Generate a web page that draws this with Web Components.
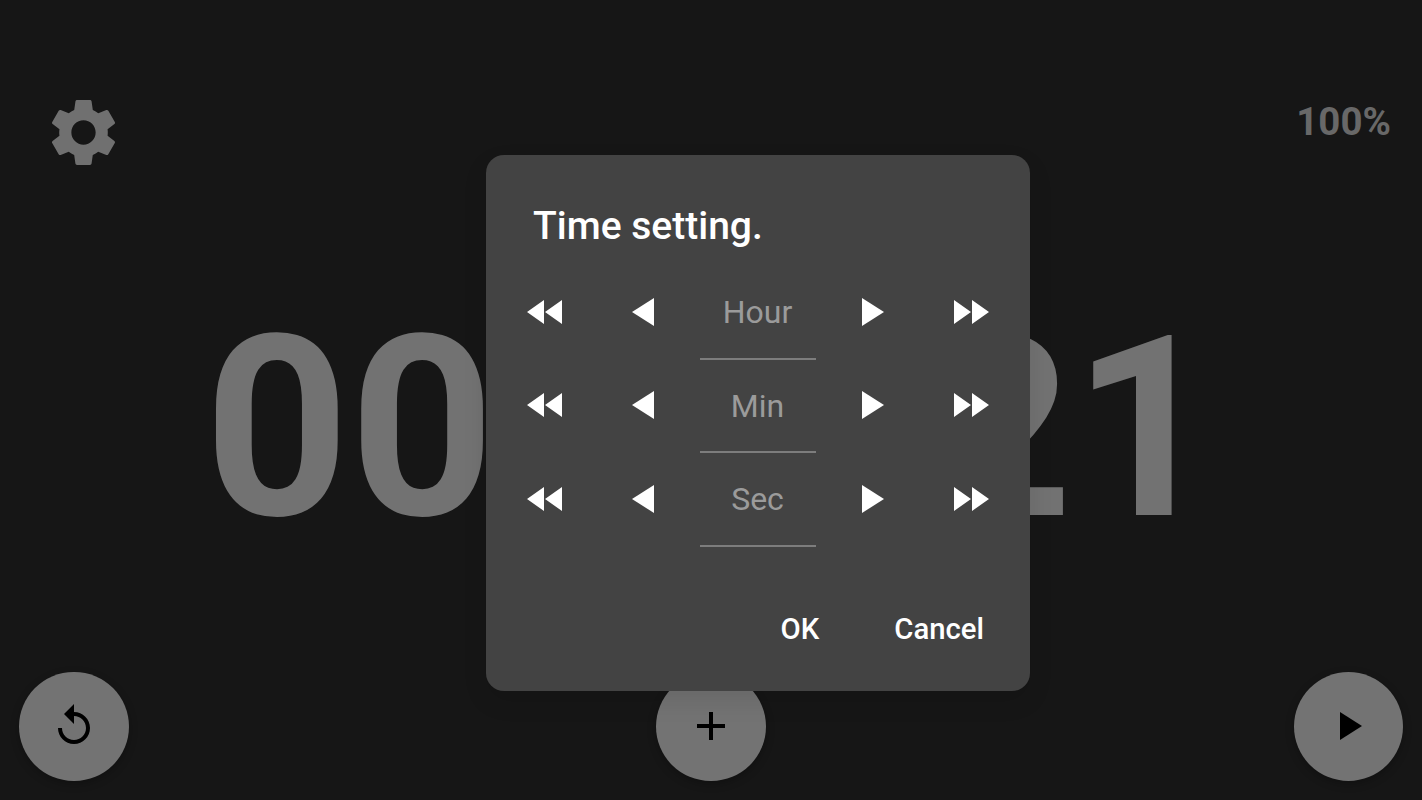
<!DOCTYPE html>
<html>
<head>
<meta charset="utf-8">
<title>Timer</title>
<style>
    html, body { margin: 0; height: 100%; background: #161616; font-family: Roboto, sans-serif; }
</style>
</head>
<body>
<timer-screen>
    <time-dialog></time-dialog>
</timer-screen>

<script>
const ICONS = {
    settings: 'M19.14,12.94c0.04-0.3,0.06-0.61,0.06-0.94c0-0.32-0.02-0.64-0.07-0.94l2.03-1.58c0.18-0.14,0.23-0.41,0.12-0.61l-1.92-3.32c-0.12-0.22-0.37-0.29-0.59-0.22l-2.39,0.96c-0.5-0.38-1.03-0.7-1.62-0.94L14.4,2.81c-0.04-0.24-0.24-0.41-0.48-0.41h-3.84c-0.24,0-0.43,0.17-0.47,0.41L9.25,5.35C8.66,5.59,8.12,5.92,7.63,6.29L5.24,5.33c-0.22-0.08-0.47,0-0.59,0.22L2.74,8.87C2.62,9.08,2.66,9.34,2.86,9.48l2.03,1.58C4.84,11.36,4.8,11.69,4.8,12s0.02,0.64,0.07,0.94l-2.03,1.58c-0.18,0.14-0.23,0.41-0.12,0.61l1.92,3.32c0.12,0.22,0.37,0.29,0.59,0.22l2.39-0.96c0.5,0.38,1.03,0.7,1.62,0.94l0.36,2.54c0.05,0.24,0.24,0.41,0.48,0.41h3.84c0.24,0,0.44-0.17,0.47-0.41l0.36-2.54c0.59-0.24,1.13-0.56,1.62-0.94l2.39,0.96c0.22,0.08,0.47,0,0.59-0.22l1.92-3.32c0.12-0.22,0.07-0.47-0.12-0.61L19.14,12.94z M12,15.6c-1.98,0-3.6-1.62-3.6-3.6s1.62-3.6,3.6-3.6s3.6,1.62,3.6,3.6S13.98,15.6,12,15.6z',
    replay: 'M12 5V1L7 6l5 5V7c3.31 0 6 2.69 6 6s-2.69 6-6 6-6-2.69-6-6H4c0 4.42 3.58 8 8 8s8-3.58 8-8-3.58-8-8-8z',
    add: 'M19 13h-6v6h-2v-6H5v-2h6V5h2v6h6v2z',
    play: 'M8 5v14l11-7z'
};

// width, height, path
const ARROWS = {
    prev2: [35, 24, 'M0 12 17 0V24zM18 12 35 0V24z'],
    prev: [22, 28, 'M0 14 22 0V28z'],
    next: [22, 28, 'M22 14 0 0V28z'],
    next2: [35, 24, 'M35 12 18 0V24zM17 12 0 0V24z']
};

class RoundButton extends HTMLElement {
    constructor() {
        super();
        this.attachShadow({ mode: 'open' });
        const icon = ICONS[this.getAttribute('icon')];
        this.shadowRoot.innerHTML = `
            <style>
                :host {
                    display: flex;
                    align-items: center;
                    justify-content: center;
                    width: 109.5px;
                    height: 109.5px;
                    border-radius: 50%;
                    background: #737373;
                    box-shadow: 0 3px 8px rgba(0, 0, 0, 0.25);
                }
                svg { width: 48px; height: 48px; fill: #000; }
            </style>
            <svg viewBox="0 0 24 24"><path d="${icon}"/></svg>
        `;
    }
}

class ArrowButton extends HTMLElement {
    constructor() {
        super();
        this.attachShadow({ mode: 'open' });
        const [w, h, d] = ARROWS[this.getAttribute('kind')];
        this.shadowRoot.innerHTML = `
            <style>
                :host { display: flex; align-items: center; justify-content: center; padding-bottom: 2px; }
                :host([kind="next2"]) { padding-left: 2px; }
                svg { display: block; fill: #fff; }
            </style>
            <svg width="${w}" height="${h}" viewBox="0 0 ${w} ${h}"><path d="${d}"/></svg>
        `;
    }
}

class TimeRow extends HTMLElement {
    constructor() {
        super();
        this.attachShadow({ mode: 'open' });
        this.shadowRoot.innerHTML = `
            <style>
                :host {
                    display: grid;
                    grid-template-columns: 98px 98px 132px 98px 98px;
                    height: 93.5px;
                }
                .field {
                    display: flex;
                    align-items: center;
                    justify-content: center;
                    margin: 0 8px;
                    box-sizing: border-box;
                    border-bottom: 2px solid #7d7d7d;
                    padding-top: 1px;
                    font-size: 32px;
                    color: #9b9b9b;
                }
            </style>
            <arrow-button kind="prev2"></arrow-button>
            <arrow-button kind="prev"></arrow-button>
            <div class="field"><slot></slot></div>
            <arrow-button kind="next"></arrow-button>
            <arrow-button kind="next2"></arrow-button>
        `;
    }
}

class TimeDialog extends HTMLElement {
    constructor() {
        super();
        this.attachShadow({ mode: 'open' });
        this.shadowRoot.innerHTML = `
            <style>
                :host {
                    position: absolute;
                    left: 486px;
                    top: 155px;
                    width: 544px;
                    height: 536px;
                    box-sizing: border-box;
                    display: flex;
                    flex-direction: column;
                    border-radius: 18px;
                    background: #434343;
                    box-shadow: 0 10px 24px rgba(0, 0, 0, 0.1);
                    color: #fff;
                }
                h2 {
                    margin: 0;
                    padding: 49px 0 0 47px;
                    height: 62px;
                    font-size: 39px;
                    line-height: 44px;
                    font-weight: 500;
                }
                .rows { display: flex; flex-direction: column; padding-left: 9.5px; }
                .actions {
                    display: flex;
                    justify-content: flex-end;
                    gap: 75px;
                    margin-top: auto;
                    padding: 0 46px 44px 0;
                    font-size: 29.3px;
                    line-height: 36px;
                    font-weight: 500;
                }
            </style>
            <h2>Time setting.</h2>
            <div class="rows">
                <time-row>Hour</time-row>
                <time-row>Min</time-row>
                <time-row>Sec</time-row>
            </div>
            <div class="actions"><span>OK</span><span>Cancel</span></div>
        `;
    }
}

class TimerScreen extends HTMLElement {
    constructor() {
        super();
        this.attachShadow({ mode: 'open' });
        this.shadowRoot.innerHTML = `
            <style>
                :host {
                    display: flex;
                    flex-direction: column;
                    position: relative;
                    width: 1422px;
                    height: 800px;
                    overflow: hidden;
                    background: #161616;
                    font-family: Roboto, sans-serif;
                }
                .top {
                    display: flex;
                    justify-content: space-between;
                    align-items: flex-start;
                    padding: 92px 31px 0 43px;
                }
                .gear { width: 81px; height: 81px; fill: #707070; display: block; }
                .percent {
                    margin-top: 8px;
                    font-size: 38.5px;
                    line-height: 44px;
                    font-weight: 700;
                    color: #686868;
                }
                .clock {
                    flex: 1;
                    display: flex;
                    align-items: center;
                    justify-content: center;
                    padding-top: 14px;
                    font-size: 253px;
                    line-height: 300px;
                    font-weight: 700;
                    color: #727272;
                    white-space: nowrap;
                }
                .bottom {
                    display: flex;
                    justify-content: space-between;
                    padding: 0 19px 19px;
                }
            </style>
            <div class="top">
                <svg class="gear" viewBox="0 0 24 24"><path d="${ICONS.settings}"/></svg>
                <div class="percent">100%</div>
            </div>
            <div class="clock">00:00:21</div>
            <div class="bottom">
                <round-button icon="replay"></round-button>
                <round-button icon="add"></round-button>
                <round-button icon="play"></round-button>
            </div>
            <slot></slot>
        `;
    }
}

customElements.define('round-button', RoundButton);
customElements.define('arrow-button', ArrowButton);
customElements.define('time-row', TimeRow);
customElements.define('time-dialog', TimeDialog);
customElements.define('timer-screen', TimerScreen);
</script>
</body>
</html>
